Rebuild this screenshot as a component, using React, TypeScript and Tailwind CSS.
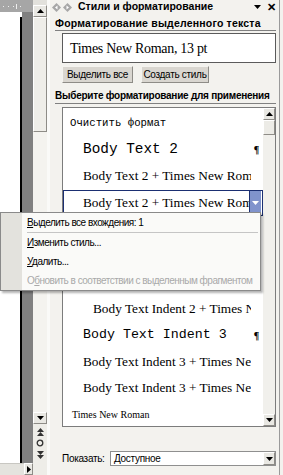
import type { ReactNode } from 'react'

const sans = "font-['Liberation_Sans',Arial,sans-serif]"
const serif = "font-['Liberation_Serif','Times_New_Roman',serif]"
const mono = "font-['Liberation_Mono','DejaVu_Sans_Mono','Courier_New',monospace]"

function Tri({ dir, color = '#000' }: { dir: 'up' | 'down' | 'right'; color?: string }) {
  if (dir === 'right')
    return (
      <svg width="4" height="7" viewBox="0 0 4 7">
        <path d="M0 0 L4 3.5 L0 7 Z" fill={color} />
      </svg>
    )
  return (
    <svg width="7" height="4" viewBox="0 0 7 4">
      <path d={dir === 'up' ? 'M0 4 L3.5 0 L7 4 Z' : 'M0 0 L7 0 L3.5 4 Z'} fill={color} />
    </svg>
  )
}

function ScrollBtn({ dir, className = '' }: { dir: 'up' | 'down' | 'right'; className?: string }) {
  return (
    <div
      className={`flex shrink-0 items-center justify-center border border-t-white border-l-white border-r-[#8e8c87] border-b-[#8e8c87] bg-[#e9e8e3] ${className}`}
    >
      <Tri dir={dir} />
    </div>
  )
}

function NavIcon({ back }: { back?: boolean }) {
  return (
    <svg width="9" height="9" viewBox="0 0 9 9">
      <path d="M4.5 0 L9 4.5 L4.5 9 L0 4.5 Z" fill="#a7a7a7" />
      <path d={back ? 'M5.5 2.5 L3 4.5 L5.5 6.5 Z' : 'M3.5 2.5 L6 4.5 L3.5 6.5 Z'} fill="#fff" />
    </svg>
  )
}

function Heading({ children, className = '' }: { children: ReactNode; className?: string }) {
  return (
    <div
      className={`ml-[5px] mr-[3px] border-b border-[#808080] pb-[1px] leading-[12px] font-bold whitespace-nowrap text-black ${className}`}
    >
      {children}
    </div>
  )
}

function Row({
  children,
  pad,
  font,
  mark,
  selected,
}: {
  children: ReactNode
  pad: string
  font: string
  mark?: boolean
  selected?: boolean
}) {
  return (
    <div
      className={`flex h-[26.5px] shrink-0 items-center ${selected ? 'border border-[#1b2f72]' : 'border border-transparent'}`}
    >
      <div className={`min-w-0 flex-1 overflow-hidden whitespace-nowrap text-black ${pad} ${font}`}>{children}</div>
      {selected ? (
        <div className="mr-px flex h-full w-[12px] shrink-0 items-center justify-center border-l border-[#1b2f72] bg-[#8093cc]">
          <Tri dir="down" color="#fff" />
        </div>
      ) : (
        <div className={`w-[11px] shrink-0 text-center text-[10px] font-bold text-black ${serif}`}>{mark ? '¶' : ''}</div>
      )}
    </div>
  )
}

export default function App() {
  const item = 'flex h-[19px] shrink-0 items-center overflow-hidden whitespace-nowrap text-[10px] tracking-[-0.5px] text-black'
  return (
    <div className={`relative flex h-[475px] w-[283px] overflow-hidden bg-[#f3f2ee] ${sans}`}>
      {/* document edge */}
      <div className="flex w-[33px] shrink-0 flex-col">
        <div className="flex h-[12px] items-center bg-[#a6a6a6] pl-[2px]">
          <svg width="20" height="5" viewBox="0 0 20 5">
            <rect x="1" y="2" width="1" height="1" fill="#eee" />
            <rect x="6" y="2" width="1" height="1" fill="#eee" />
            <rect x="11" y="2" width="1" height="1" fill="#eee" />
            <rect x="14" y="0" width="1" height="5" fill="#eee" />
            <rect x="18" y="2" width="1" height="1" fill="#eee" />
          </svg>
        </div>
        <div className="flex flex-1">
          <div className="w-[20px] bg-white" />
          <div className="w-[2px] bg-white">
            <div className="mt-[5px] h-full bg-black" />
          </div>
          <div className="flex-1 bg-[#808080]" />
        </div>
        <div className="flex h-[12px]">
          <div className="flex-1 border-t border-[#c8c7c2] bg-[#e4e3de]" />
          <ScrollBtn dir="right" className="w-[9px]" />
        </div>
      </div>

      {/* document vertical scrollbar */}
      <div className="flex w-[14px] shrink-0 flex-col bg-[#eeede8]">
        <div className="h-[5px] bg-[#e2e1dc]" />
        <ScrollBtn dir="up" className="h-[12px]" />
        <div className="h-[115px] border border-t-white border-l-white border-r-[#8e8c87] border-b-[#8e8c87] bg-[#efeee9]" />
        <div className="flex-1 bg-[#f4f3ef]" />
        <ScrollBtn dir="down" className="h-[12px]" />
        <div className="flex h-[39px] flex-col items-center justify-around py-[2px]">
          <svg width="7" height="8" viewBox="0 0 7 8">
            <path d="M0 4 L3.5 0 L7 4 Z M0 8 L3.5 4 L7 8 Z" fill="#333" />
          </svg>
          <svg width="8" height="8" viewBox="0 0 8 8">
            <circle cx="4" cy="4" r="2.8" fill="none" stroke="#333" strokeWidth="1.3" />
          </svg>
          <svg width="7" height="8" viewBox="0 0 7 8">
            <path d="M0 0 L7 0 L3.5 4 Z M0 4 L7 4 L3.5 8 Z" fill="#333" />
          </svg>
        </div>
        <div className="h-[12px]" />
      </div>

      {/* task pane */}
      <div className="mr-[3px] flex w-[233px] shrink-0 flex-col border-r border-l-[3px] border-r-[#9a9a9a] border-l-[#fafaf8]">
        <div className="flex h-[14px] shrink-0 items-center pl-[2px] pr-[3px]">
          <NavIcon back />
          <div className="w-[2px]" />
          <NavIcon />
          <span className="ml-[6px] text-[10.5px] font-bold whitespace-nowrap text-black">Стили и форматирование</span>
          <span className="ml-auto">
            <Tri dir="down" />
          </span>
          <span className="ml-[6px] text-[11px] font-bold leading-none text-black">✕</span>
        </div>

        <Heading className="mt-[3px] text-[10.5px] tracking-[0.2px]">Форматирование выделенного текста</Heading>

        <div className="mt-[2px] mr-[3px] ml-[12px] flex h-[30px] shrink-0 items-center border border-[#5b5b5b] bg-white pl-[7px]">
          <span className={`text-[14px] tracking-[-0.3px] whitespace-nowrap text-black ${serif}`}>Times New Roman, 13 pt</span>
        </div>

        <div className="mt-[3px] ml-[12px] flex shrink-0 gap-[8px]">
          <button className="h-[17px] w-[71px] border border-t-[#f4f3ef] border-l-[#f4f3ef] border-r-[#8e8c87] border-b-[#8e8c87] bg-[#d9d6d0] text-[10px] tracking-[-0.3px] text-black">
            Выделить все
          </button>
          <button className="h-[17px] w-[68px] border border-t-[#f4f3ef] border-l-[#f4f3ef] border-r-[#8e8c87] border-b-[#8e8c87] bg-[#d9d6d0] text-[10px] tracking-[-0.3px] text-black">
            Создать стиль
          </button>
        </div>

        <Heading className="mt-[7px] text-[10px] tracking-[-0.25px]">Выберите форматирование для применения</Heading>

        <div className="mt-[3px] mr-[3px] ml-[12px] flex h-[320px] shrink-0 border border-[#7c7c7c] bg-white">
          <div className="flex min-w-0 flex-1 flex-col overflow-hidden pt-[2px]">
            <Row pad="pl-[6px]" font={`text-[10.7px] ${mono}`}>
              Очистить формат
            </Row>
            <Row pad="pl-[19px]" font={`text-[14.4px] ${mono}`} mark>
              Body Text 2
            </Row>
            <Row pad="pl-[19px]" font={`text-[13.3px] ${serif}`}>
              Body Text 2 + Times New Roman
            </Row>
            <Row pad="pl-[19px]" font={`text-[13.3px] ${serif}`} selected>
              Body Text 2 + Times New Roman
            </Row>
            <Row pad="pl-[19px]" font={`text-[13.3px] ${mono}`} mark>
              Body Text Indent
            </Row>
            <Row pad="pl-[19px]" font={`text-[13.3px] ${serif}`}>
              Body Text Indent + Times New Roman
            </Row>
            <Row pad="pl-[19px]" font={`text-[13.3px] ${mono}`} mark>
              Body Text Indent 2
            </Row>
            <Row pad="pl-[29px]" font={`text-[13.3px] ${serif}`}>
              Body Text Indent 2 + Times New Roman
            </Row>
            <Row pad="pl-[19px]" font={`text-[13.3px] ${mono}`} mark>
              Body Text Indent 3
            </Row>
            <Row pad="pl-[19px]" font={`text-[13.3px] ${serif}`}>
              Body Text Indent 3 + Times New Roman
            </Row>
            <Row pad="pl-[19px]" font={`text-[13.3px] ${serif}`}>
              Body Text Indent 3 + Times New Roman
            </Row>
            <Row pad="pl-[8px]" font={`text-[10px] ${serif}`}>
              Times New Roman
            </Row>
          </div>
          <div className="flex w-[12px] shrink-0 flex-col bg-[#f1f0ec]">
            <ScrollBtn dir="up" className="h-[12px]" />
            <div className="h-[15px] border border-t-white border-l-white border-r-[#8e8c87] border-b-[#8e8c87] bg-[#ecebe6]" />
            <div className="flex-1" />
            <ScrollBtn dir="down" className="h-[12px]" />
          </div>
        </div>

        <div className="mt-[24px] mr-[3px] ml-[12px] flex h-[15px] shrink-0 items-center">
          <span className="w-[48px] text-[10px] tracking-[-0.3px] text-black">Показать:</span>
          <div className="flex h-full flex-1 items-center border border-[#8f8f8f] bg-white">
            <span className="flex-1 pl-[3px] text-[10px] tracking-[-0.3px] text-black">Доступное</span>
            <ScrollBtn dir="down" className="h-full w-[12px]" />
          </div>
        </div>
      </div>

      {/* context menu */}
      <div className="absolute top-[212px] left-0 flex h-[79px] w-[261px] border border-[#8a8a8a] bg-[#fafaf8] shadow-[2px_2px_2px_rgba(0,0,0,0.3)]">
        <div className="w-[21px] shrink-0 bg-[#e3e2dd]" />
        <div className="flex min-w-0 flex-1 flex-col pl-[5px]">
          <div className={item}>
            <span>
              <u>В</u>ыделить все вхождения: 1
            </span>
          </div>
          <div className="mr-[2px] h-px shrink-0 bg-[#c5c5c5]" />
          <div className={item}>
            <span>
              <u>И</u>зменить стиль...
            </span>
          </div>
          <div className={item}>
            <span>
              <u>У</u>далить...
            </span>
          </div>
          <div className={`${item} text-[#a9a9a9]`}>
            <span className="text-[#a9a9a9]">
              О<u>б</u>новить в соответствии с выделенным фрагментом
            </span>
          </div>
        </div>
      </div>
    </div>
  )
}
